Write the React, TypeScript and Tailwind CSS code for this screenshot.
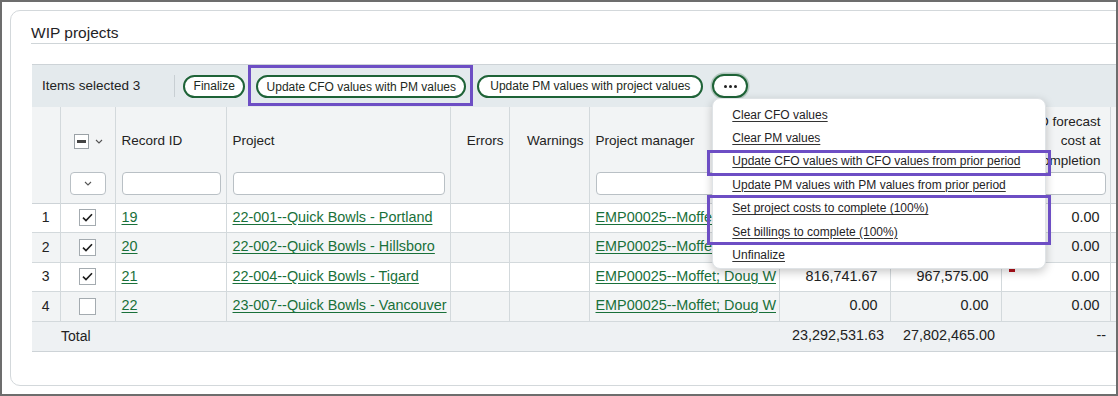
import React from 'react'

type Row = {
  n: number
  checked: boolean
  id: string
  project: string
  pm: string
  cost: string
  billed: string
  forecast: string
  flag?: boolean
}

const ROWS: Row[] = [
  { n: 1, checked: true, id: '19', project: '22-001--Quick Bowls - Portland', pm: 'EMP00025--Moffet; Doug W', cost: '12,851,406.22', billed: '15,412,300.00', forecast: '0.00' },
  { n: 2, checked: true, id: '20', project: '22-002--Quick Bowls - Hillsboro', pm: 'EMP00025--Moffet; Doug W', cost: '9,624,383.74', billed: '11,422,590.00', forecast: '0.00' },
  { n: 3, checked: true, id: '21', project: '22-004--Quick Bowls - Tigard', pm: 'EMP00025--Moffet; Doug W', cost: '816,741.67', billed: '967,575.00', forecast: '0.00', flag: true },
  { n: 4, checked: false, id: '22', project: '23-007--Quick Bowls - Vancouver', pm: 'EMP00025--Moffet; Doug W', cost: '0.00', billed: '0.00', forecast: '0.00' },
]

const MENU_ITEMS = [
  'Clear CFO values',
  'Clear PM values',
  'Update CFO values with CFO values from prior period',
  'Update PM values with PM values from prior period',
  'Set project costs to complete (100%)',
  'Set billings to complete (100%)',
  'Unfinalize',
]

function Chevron({ className = '' }: { className?: string }) {
  return (
    <svg className={className} width="8" height="5" viewBox="0 0 8 5" fill="none" stroke="#555" strokeWidth={1.1} aria-hidden="true">
      <path d="M1 1l3 3 3-3" />
    </svg>
  )
}

function Checkbox({ checked }: { checked: boolean }) {
  return (
    <span className="flex h-[17px] w-[17px] items-center justify-center border border-[#a4abb0] bg-white">
      {checked && (
        <svg width="11" height="9" viewBox="0 0 11 9" fill="none" stroke="#1b1b1b" strokeWidth={1.6} aria-hidden="true">
          <path d="M1 4.6l3 3L10 1.2" />
        </svg>
      )}
    </span>
  )
}

function FilterInput() {
  return <div className="h-[23px] rounded-[4px] border border-[#b9c0c5] bg-white" />
}

function PillButton({ className = '', children }: { className?: string; children: React.ReactNode }) {
  return (
    <button
      type="button"
      className={`h-[23px] shrink-0 rounded-full border-2 border-[#1e6337] bg-white text-center text-[12px] leading-none text-[#1d2a22] ${className}`}
    >
      {children}
    </button>
  )
}

export default function App() {
  return (
    <div className="h-[396px] w-[1118px] overflow-hidden border-2 border-[#6d6d6d] bg-white pl-[8px] pt-[8px] font-['Liberation_Sans',Arial,sans-serif] text-[#222]">
      <div className="h-[376px] w-[1160px] rounded-[10px] border border-[#d3d8db] pl-[20px] pt-[11px]">
        {/* Title */}
        <div className="border-b border-[#cfd5d8] text-[15.5px] leading-[21px] text-[#1f2326]">WIP projects</div>

        {/* Toolbar */}
        <div className="ml-[1px] mt-[20px] flex h-[43px] items-center border-t border-[#cdd3d7] bg-[#e4eaed] pl-[10px]">
          <span className="text-[13.5px] text-[#222]">Items selected 3</span>
          <span className="ml-[34px] h-[22px] w-px bg-[#c8cfd3]" />
          <PillButton className="ml-[8px] w-[62px]">Finalize</PillButton>
          <div className="relative ml-[11px]">
            <PillButton className="w-[210px]">Update CFO values with PM values</PillButton>
            <div className="pointer-events-none absolute -bottom-[8px] -left-[8px] -right-[7px] -top-[9px] border-[3px] border-[#6d4ec4]" />
          </div>
          <PillButton className="ml-[11px] w-[226px]">Update PM values with project values</PillButton>
          <div className="relative ml-[9px]">
            <button
              type="button"
              className="flex h-[24px] w-[36px] items-center justify-center gap-[2px] rounded-full border-[2.5px] border-[#1e6337] bg-white shadow-[0_0_0_1.5px_rgba(30,99,55,0.25)]"
            >
              <span className="h-[3px] w-[3px] rounded-full bg-[#222]" />
              <span className="h-[3px] w-[3px] rounded-full bg-[#222]" />
              <span className="h-[3px] w-[3px] rounded-full bg-[#222]" />
            </button>

            {/* Dropdown menu */}
            <div className="absolute left-0 top-full z-20 w-[334px] rounded-[8px] border border-[#dfe3e6] bg-white pb-[1px] pl-[19px] pt-[4px] shadow-[0_3px_10px_rgba(0,0,0,0.22)]">
              {MENU_ITEMS.map((item) => (
                <div key={item} className="flex h-[23.4px] items-center">
                  <span className="text-[12px] text-[#1f2326] underline decoration-[#333] underline-offset-[2px]">{item}</span>
                </div>
              ))}
              <div className="pointer-events-none absolute -left-[6px] -right-[6px] top-[51px] h-[26px] border-[3px] border-[#6d4ec4]" />
              <div className="pointer-events-none absolute -left-[6px] -right-[6px] top-[96px] h-[50px] border-[3px] border-[#6d4ec4]" />
            </div>
          </div>
        </div>

        {/* Table */}
        <table className="ml-[1px] w-[1138px] table-fixed border-collapse text-[14.4px]">
          <colgroup>
            <col className="w-[28px]" />
            <col className="w-[55px]" />
            <col className="w-[111px]" />
            <col className="w-[224px]" />
            <col className="w-[59px]" />
            <col className="w-[80px]" />
            <col className="w-[190px]" />
            <col className="w-[111px]" />
            <col className="w-[111px]" />
            <col className="w-[109px]" />
            <col className="w-[60px]" />
          </colgroup>
          <thead>
            <tr className="h-[96px] border-b border-[#cdd3d7] bg-[#f2f4f5] align-top text-[13.5px]">
              <th className="border-r border-[#d3d9dc] font-normal" />
              <th className="border-r border-[#d3d9dc] px-[9px] pt-[4px] font-normal">
                <div className="flex h-[60px] items-center justify-center gap-[6px] pl-[2px]">
                  <span className="flex h-[15px] w-[15px] items-center justify-center border border-[#9aa1a6] bg-white">
                    <span className="h-[3px] w-[9px] bg-[#444]" />
                  </span>
                  <Chevron />
                </div>
                <div className="mt-[1px] flex h-[23px] items-center justify-center rounded-[4px] border border-[#b9c0c5] bg-white">
                  <Chevron />
                </div>
              </th>
              <th className="border-r border-[#d3d9dc] pl-[6px] pr-[5px] pt-[4px] text-left font-normal">
                <div className="flex h-[60px] items-center">Record ID</div>
                <div className="mt-[1px]"><FilterInput /></div>
              </th>
              <th className="border-r border-[#d3d9dc] pl-[6px] pr-[5px] pt-[4px] text-left font-normal">
                <div className="flex h-[60px] items-center">Project</div>
                <div className="mt-[1px]"><FilterInput /></div>
              </th>
              <th className="border-r border-[#d3d9dc] pr-[5px] pt-[4px] font-normal">
                <div className="flex h-[60px] items-center justify-end">Errors</div>
              </th>
              <th className="border-r border-[#d3d9dc] pr-[5px] pt-[4px] font-normal">
                <div className="flex h-[60px] items-center justify-end">Warnings</div>
              </th>
              <th className="border-r border-[#d3d9dc] pl-[6px] pr-[5px] pt-[4px] text-left font-normal">
                <div className="flex h-[60px] items-center">Project manager</div>
                <div className="mt-[1px]"><FilterInput /></div>
              </th>
              <th className="border-r border-[#d3d9dc] pl-[6px] pr-[5px] pt-[4px] font-normal">
                <div className="h-[60px]" />
                <div className="mt-[1px]"><FilterInput /></div>
              </th>
              <th className="border-r border-[#d3d9dc] pl-[6px] pr-[5px] pt-[4px] font-normal">
                <div className="h-[60px]" />
                <div className="mt-[1px]"><FilterInput /></div>
              </th>
              <th className="border-r border-[#d3d9dc] pl-[4px] pr-[4px] pt-[4px] font-normal">
                <div className="flex h-[60px] items-center justify-end pr-[5px] text-right leading-[19.5px]">CFO forecast cost at completion</div>
                <div className="mt-[1px]"><FilterInput /></div>
              </th>
              <th className="font-normal" />
            </tr>
          </thead>
          <tbody>
            {ROWS.map((r) => (
              <tr key={r.n} className={`h-[29.5px] border-b border-[#d3d9dc] ${r.n % 2 === 0 ? 'bg-[#f2f4f5]' : 'bg-white'}`}>
                <td className="border-r border-[#d3d9dc] text-center text-[14px]">{r.n}</td>
                <td className="border-r border-[#d3d9dc]">
                  <div className="flex justify-center"><Checkbox checked={r.checked} /></div>
                </td>
                <td className="border-r border-[#d3d9dc] pl-[6px]">
                  <a className="text-[#19703a] underline underline-offset-[2px]">{r.id}</a>
                </td>
                <td className="overflow-hidden whitespace-nowrap border-r border-[#d3d9dc] pl-[6px]">
                  <a className="text-[#19703a] underline underline-offset-[2px]">{r.project}</a>
                </td>
                <td className="border-r border-[#d3d9dc]" />
                <td className="border-r border-[#d3d9dc]" />
                <td className="overflow-hidden whitespace-nowrap border-r border-[#d3d9dc] pl-[6px]">
                  <a className="text-[#19703a] underline underline-offset-[2px]">{r.pm}</a>
                </td>
                <td className="border-r border-[#d3d9dc] pr-[12px] text-right">{r.n > 2 ? r.cost : ''}</td>
                <td className="border-r border-[#d3d9dc] pr-[12px] text-right">{r.n > 2 ? r.billed : ''}</td>
                <td className="relative border-r border-[#d3d9dc] pr-[10px] text-right">
                  {r.flag && <span className="absolute left-[7px] top-0 h-[9px] w-[6px] bg-[#b3121b]" />}
                  {r.forecast}
                </td>
                <td />
              </tr>
            ))}
            <tr className="h-[30px] border-b border-[#cdd3d7] bg-[#eef1f3]">
              <td />
              <td colSpan={2} className="pl-[1px] text-[14px]">Total</td>
              <td />
              <td />
              <td />
              <td />
              <td className="pr-[6px] text-right">23,292,531.63</td>
              <td className="pr-[6px] text-right">27,802,465.00</td>
              <td className="pr-[4px] text-right">--</td>
              <td />
            </tr>
          </tbody>
        </table>
      </div>
    </div>
  )
}
